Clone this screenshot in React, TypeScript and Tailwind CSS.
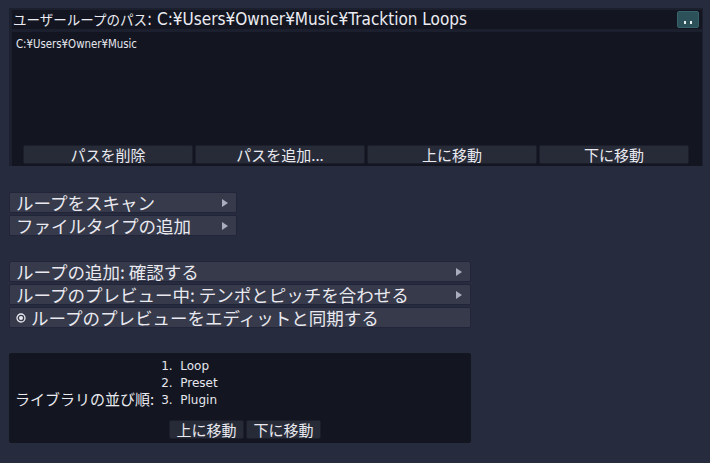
import React from "react";

const F = { fontFamily: '"DejaVu Sans", "Noto Sans CJK JP", sans-serif' };
const J = { fontFamily: '"Noto Sans CJK JP", "DejaVu Sans", sans-serif' };

function Arrow() {
  return (
    <svg width="6" height="8" viewBox="0 0 6 8" className="shrink-0">
      <path d="M0 0 L6 4 L0 8 Z" fill="#a9aebd" />
    </svg>
  );
}

function MenuItem({ label, arrow = true, radio = false, w }: { label: string; arrow?: boolean; radio?: boolean; w: string }) {
  return (
    <div className={`${w} h-[21px] flex items-center justify-between pl-[6px] pr-[8px] bg-[#363a4b] border border-[#22253a] rounded-[2px] text-[17.5px] leading-none text-[#e9e9ef]`} style={J}>
      <span className="flex items-center gap-[5px]">
        {radio && (
          <svg width="10" height="10" viewBox="0 0 10 10">
            <circle cx="5" cy="5" r="4" fill="none" stroke="#e9e9ef" strokeWidth="1.3" />
            <circle cx="5" cy="5" r="2" fill="#e9e9ef" />
          </svg>
        )}
        <span>{label}</span>
      </span>
      {arrow && <Arrow />}
    </div>
  );
}

function Btn({ label, w }: { label: string; w: string }) {
  return (
    <div className={`${w} h-[19px] flex items-center justify-center bg-[#272b38] border border-[#1c1f2b] rounded-[2px] text-[15px] leading-none text-[#e9e9ef]`} style={J}>
      {label}
    </div>
  );
}

export default function App() {
  return (
    <div className="w-[710px] h-[463px] bg-[#272b3e] pl-[9px] pt-[8px] overflow-hidden">
      <div className="w-[694px] h-[158px] bg-[#1c1f2d] flex flex-col pl-[3px] pr-[1px] pt-[2px]">
        <div className="h-[19px] bg-[#131621] flex items-center justify-between pl-[1px] pr-[3px]">
          <div className="flex items-center whitespace-nowrap leading-none text-[#ececf2]">
            <span className="text-[13.5px]" style={J}>ユーザーループのパス</span>
            <span className="inline-block origin-left scale-x-[0.9] text-[17px]" style={F}>: C:¥Users¥Owner¥Music¥Tracktion Loops</span>
          </div>
          <div className="w-[22px] h-[17px] bg-[#2c5159] rounded-[2px] border border-[#36626b] flex items-end justify-center gap-[4px] pb-[3px]">
            <span className="w-[2px] h-[3px] bg-[#e6eef0]" />
            <span className="w-[2px] h-[3px] bg-[#e6eef0]" />
          </div>
        </div>
        <div className="mt-[3px] flex-1 bg-[#131621] flex flex-col pl-[4px] pb-[2px]">
          <div className="pt-[6px] text-[12px] leading-none text-[#e6e6ee] whitespace-nowrap origin-left scale-x-[0.85]" style={F}>
            C:¥Users¥Owner¥Music
          </div>
          <div className="mt-auto flex gap-[2px] pl-[7px]">
            <Btn label="パスを削除" w="w-[170px]" />
            <Btn label="パスを追加..." w="w-[170px]" />
            <Btn label="上に移動" w="w-[170px]" />
            <Btn label="下に移動" w="w-[150px]" />
          </div>
        </div>
      </div>

      <div className="mt-[26px] flex flex-col gap-[2px]">
        <MenuItem label="ループをスキャン" w="w-[228px]" />
        <MenuItem label="ファイルタイプの追加" w="w-[228px]" />
      </div>

      <div className="mt-[25px] flex flex-col gap-[2px]">
        <MenuItem label="ループの追加: 確認する" w="w-[462px]" />
        <MenuItem label="ループのプレビュー中: テンポとピッチを合わせる" w="w-[462px]" />
        <MenuItem label="ループのプレビューをエディットと同期する" arrow={false} radio w="w-[462px]" />
      </div>

      <div className="mt-[25px] w-[462px] h-[90px] bg-[#131621] rounded-[2px] flex flex-col">
        <div className="flex items-end pl-[6px] pt-[5px]">
          <span className="text-[15px] leading-none text-[#e9e9ef] whitespace-nowrap pb-[3px]" style={J}>ライブラリの並び順:</span>
          <div className="ml-[7px] flex flex-col text-[12px] leading-[17px] text-[#e6e6ee]" style={F}>
            <span>1.&nbsp; Loop</span>
            <span>2.&nbsp; Preset</span>
            <span>3.&nbsp; Plugin</span>
          </div>
        </div>
        <div className="mt-[11px] flex gap-[2px] pl-[160px]">
          <Btn label="上に移動" w="w-[75px]" />
          <Btn label="下に移動" w="w-[75px]" />
        </div>
      </div>
    </div>
  );
}
